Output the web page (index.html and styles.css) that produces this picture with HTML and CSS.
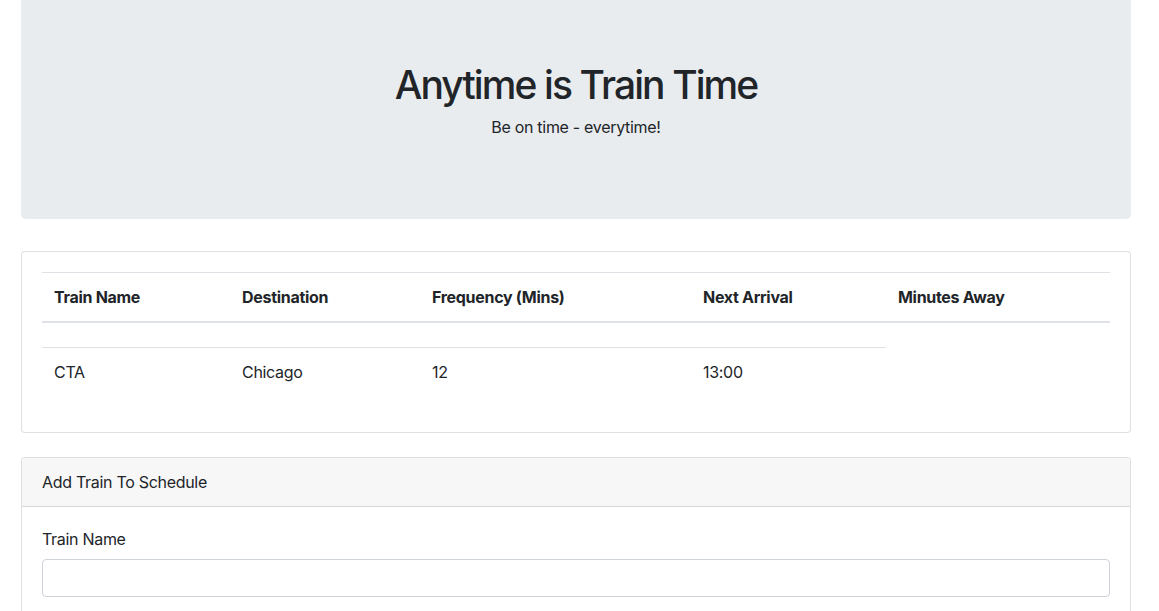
FILE: index.html
```html
<!DOCTYPE html>
<html lang="en">
<head>
<meta charset="utf-8">
<title>Train Time</title>
<link rel="stylesheet" href="styles.css">
</head>
<body>
<div class="container">
  <div class="jumbotron">
    <h1 class="title">Anytime is Train Time</h1>
    <p class="lead">Be on time - everytime!</p>
  </div>

  <div class="card">
    <div class="card-body">
      <table class="table">
        <colgroup>
          <col class="c1"><col class="c2"><col class="c3"><col class="c4"><col class="c5">
        </colgroup>
        <thead>
          <tr>
            <th>Train Name</th>
            <th>Destination</th>
            <th>Frequency (Mins)</th>
            <th>Next Arrival</th>
            <th>Minutes Away</th>
          </tr>
        </thead>
        <tbody>
          <tr class="empty-row"><td></td><td></td><td></td><td></td></tr>
          <tr>
            <td>CTA</td>
            <td>Chicago</td>
            <td>12</td>
            <td>13:00</td>
          </tr>
        </tbody>
      </table>
    </div>
  </div>

  <div class="card form-card">
    <div class="card-header">Add Train To Schedule</div>
    <div class="card-body">
      <div class="form-group">
        <label class="label" for="train-name">Train Name</label>
        <input class="form-control" id="train-name" type="text">
      </div>
    </div>
  </div>
</div>
</body>
</html>
```
FILE: styles.css
```css
* { box-sizing: border-box; }
html, body {
  margin: 0;
  padding: 0;
  background: #fff;
  color: #212529;
  font-family: Inter, "Noto Sans", "Liberation Sans", sans-serif;
  font-size: 16px;
  line-height: 1.5;
  letter-spacing: -0.3px;
}
.container {
  width: 1110px;
  margin-left: 21px;
}
.jumbotron {
  background: #e9ecef;
  border-radius: 0 0 4.8px 4.8px;
  padding: 59px 32px 64px;
  margin-bottom: 32px;
  text-align: center;
}
.title {
  margin: 0 0 6px;
  padding-top: 2px;
  font-size: 39px;
  font-weight: 500;
  line-height: 48px;
  letter-spacing: -1.9px;
}
.lead {
  margin: 0 0 16px;
}
.card {
  border: 1px solid rgba(0,0,0,.125);
  border-radius: 4px;
  background: #fff;
  margin-bottom: 24px;
  overflow: hidden;
}
.card-body {
  padding: 20px;
}
.table {
  width: 100%;
  border-collapse: collapse;
  margin-bottom: 16px;
}
.c1 { width: 188px; }
.c2 { width: 190px; }
.c3 { width: 271px; }
.c4 { width: 195px; }
.c5 { width: 224px; }
.table th, .table td {
  padding: 12px;
  text-align: left;
  vertical-align: top;
  border-top: 1px solid #dee2e6;
}
.table th { font-weight: 700; }
.table thead th { border-bottom: 2px solid #dee2e6; }
.empty-row td { height: 25px; padding: 0; border-top: none; }
.card-header {
  background: #f7f7f7;
  border-bottom: 1px solid rgba(0,0,0,.125);
  padding: 12px 20px;
}
.form-group { margin-bottom: 16px; }
.label {
  display: inline-block;
  margin-bottom: 8px;
}
.form-control {
  display: block;
  width: 100%;
  height: 38px;
  padding: 6px 12px;
  font: inherit;
  border: 1px solid #ced4da;
  border-radius: 4px;
  background: #fff;
}
```
